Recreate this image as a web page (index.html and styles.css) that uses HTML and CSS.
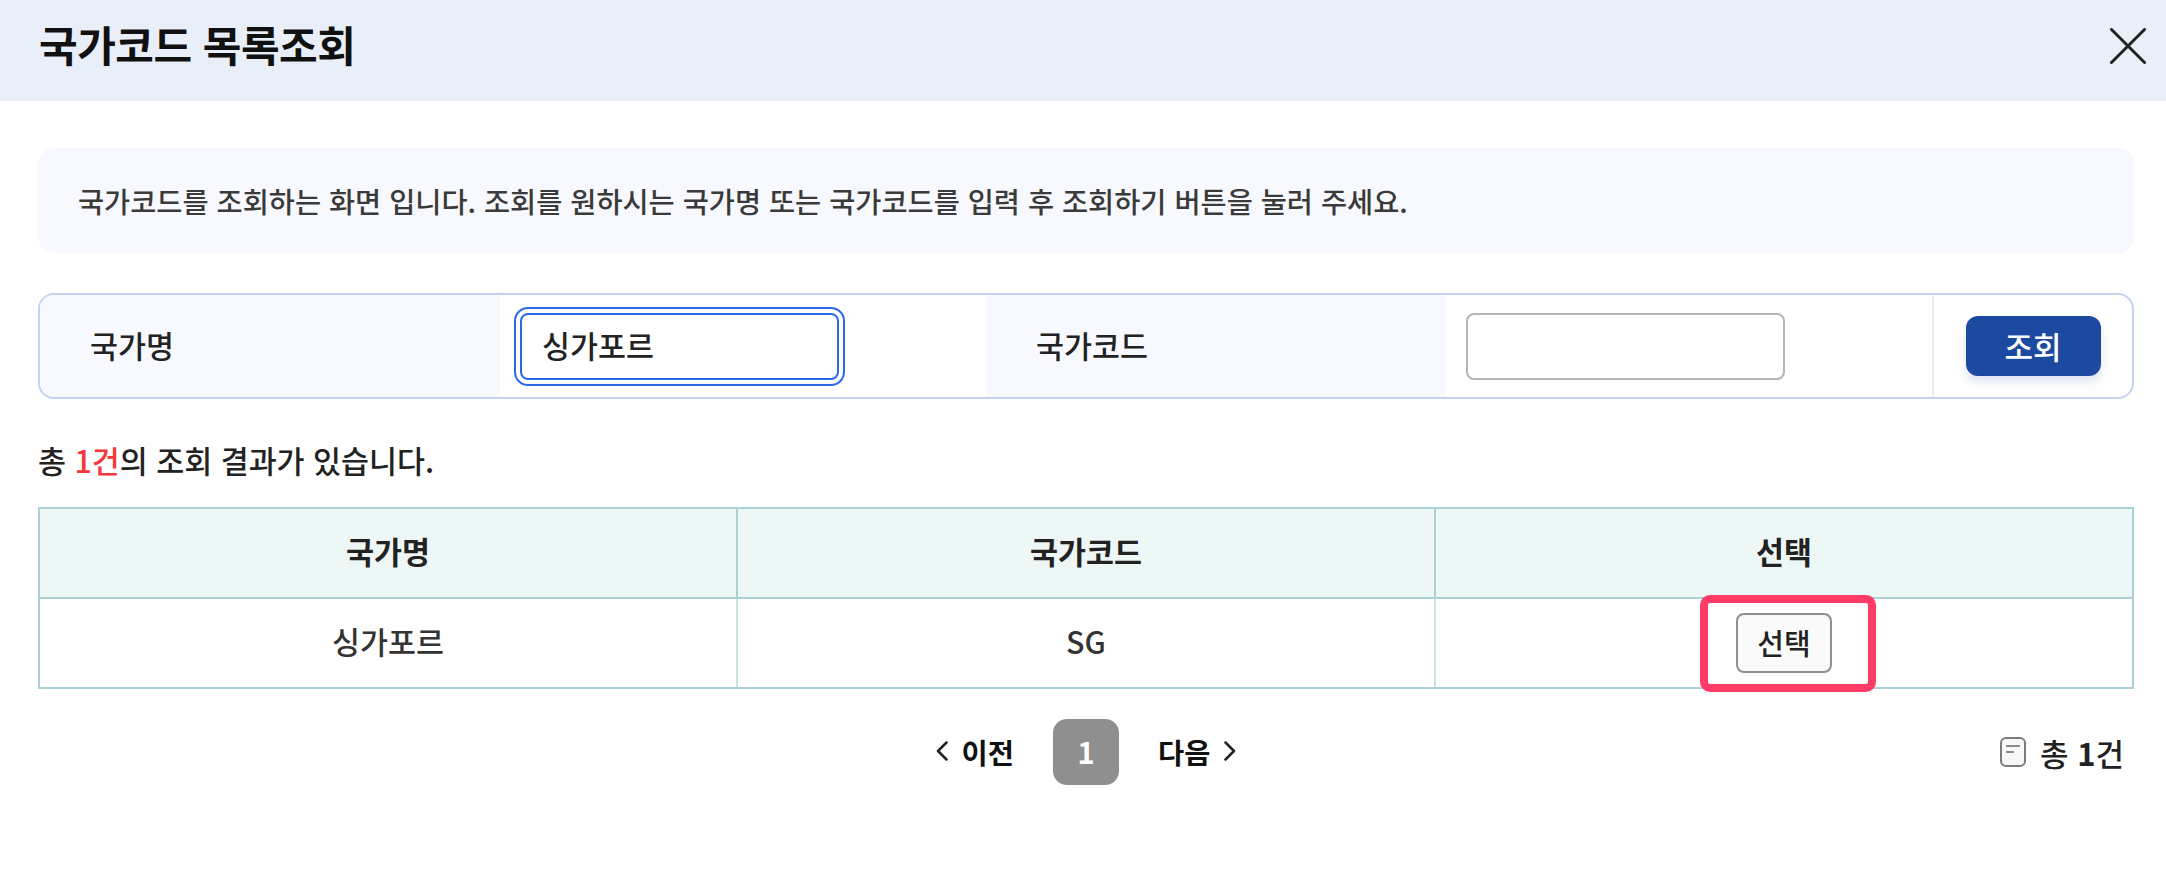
FILE: index.html
```html
<!DOCTYPE html>
<html lang="ko">
<head>
  <meta charset="UTF-8">
  <title>국가코드 목록조회</title>
  <link rel="stylesheet" href="styles.css">
</head>
<body>

  <header class="modal-head">
    <h1>국가코드 목록조회</h1>
    <button class="close-btn" aria-label="닫기">
      <svg width="36" height="36" viewBox="0 0 36 36"><path d="M1.5 1.5L34.5 34.5M34.5 1.5L1.5 34.5"/></svg>
    </button>
  </header>

  <main class="modal-body">
    <p class="info-box">국가코드를 조회하는 화면 입니다. 조회를 원하시는 국가명 또는 국가코드를 입력 후 조회하기 버튼을 눌러 주세요.</p>

    <div class="search-box">
      <label class="search-label">국가명</label>
      <div class="search-field"><input class="text-input focused" type="text" value="싱가포르"></div>
      <label class="search-label second">국가코드</label>
      <div class="search-field"><input class="text-input" type="text"></div>
      <div class="search-action"><button class="search-btn">조회</button></div>
    </div>

    <p class="result-text">총 <em>1건</em>의 조회 결과가 있습니다.</p>

    <table class="result-table">
      <thead>
        <tr><th>국가명</th><th>국가코드</th><th>선택</th></tr>
      </thead>
      <tbody>
        <tr>
          <td>싱가포르</td>
          <td>SG</td>
          <td class="select-cell">
            <button class="select-btn">선택</button>
            <span class="highlight"></span>
          </td>
        </tr>
      </tbody>
    </table>

    <div class="pager-row">
      <div class="pager">
        <a class="page-link">
          <svg width="12" height="20" viewBox="0 0 12 20"><path d="M10.5 1.5L2 10L10.5 18.5"/></svg>
          이전
        </a>
        <span class="page-num">1</span>
        <a class="page-link">
          다음
          <svg width="12" height="20" viewBox="0 0 12 20"><path d="M1.5 1.5L10 10L1.5 18.5"/></svg>
        </a>
      </div>
      <div class="total">
        <svg width="26" height="30" viewBox="0 0 26 30"><rect x="1" y="1" width="24" height="28" rx="5"/><path d="M6 9H20M6 15H14"/></svg>
        <span>총 <b>1</b>건</span>
      </div>
    </div>
  </main>

</body>
</html>
```

FILE: styles.css
```css
* {
  box-sizing: border-box;
}

body {
  margin: 0;
  background: #fff;
  color: #222;
  font-family: "Noto Sans CJK KR", "Noto Sans", sans-serif;
}

.modal-head {
  height: 101px;
  padding: 0 20px 10px 39px;
  background: #e8eff9;
  display: flex;
  align-items: center;
  justify-content: space-between;
}

.modal-head h1 {
  margin: 0 0 4px;
  font-size: 42px;
  font-weight: 700;
  color: #111;
  letter-spacing: -0.5px;
}

.close-btn {
  padding: 0;
  border: none;
  background: none;
  display: flex;
}

.close-btn path {
  stroke: #222;
  stroke-width: 3;
  stroke-linecap: round;
  fill: none;
}

.modal-body {
  padding: 47px 32px 0 38px;
}

.info-box {
  margin: 0;
  height: 105px;
  padding: 0 40px;
  display: flex;
  align-items: center;
  background: #f8f9fe;
  border-radius: 16px;
  font-size: 28.4px;
  font-weight: 500;
  color: #3a3a3a;
}

.search-box {
  margin-top: 40px;
  height: 106px;
  border: 2px solid #c3d3ef;
  border-radius: 16px;
  overflow: hidden;
  display: grid;
  grid-template-columns: 460px 486px 460px 486px 1fr;
}

.search-label {
  padding: 0 0 2px 50px;
  display: flex;
  align-items: center;
  background: #f8f9fe;
  font-size: 30.4px;
  font-weight: 500;
}

.search-field {
  padding-left: 20px;
  display: flex;
  align-items: center;
}

.text-input {
  width: 319px;
  height: 67px;
  padding: 0 20px 2px;
  border: 2px solid #b5b5b5;
  border-radius: 8px;
  background: #fff;
  font-family: inherit;
  font-size: 30.4px;
  font-weight: 500;
  color: #222;
}

.text-input.focused {
  border-color: #2a6ae8;
  outline: 2px solid #2a6ae8;
  outline-offset: 4px;
}

.search-action {
  border-left: 2px solid #e6edf8;
  display: flex;
  align-items: center;
  justify-content: center;
}

.search-btn {
  width: 135px;
  height: 60px;
  padding: 0 0 2px;
  border: none;
  border-radius: 12px;
  background: #1c4aa0;
  box-shadow: 0 6px 10px rgba(28, 74, 160, 0.15);
  color: #fff;
  font-family: inherit;
  font-size: 31px;
  font-weight: 500;
}

.result-text {
  margin: 40px 0 0;
  line-height: 42px;
  font-size: 30.4px;
  font-weight: 500;
}

.result-text em {
  font-style: normal;
  color: #f5363c;
}

.result-table {
  margin-top: 26px;
  width: 100%;
  border-collapse: collapse;
  table-layout: fixed;
}

.result-table th,
.result-table td {
  height: 90px;
  padding: 0 0 4px;
  text-align: center;
  font-size: 30.4px;
  border: 2px solid #abd1d6;
}

.result-table th {
  background: #edf7f6;
  font-weight: 700;
}

.result-table td {
  font-weight: 500;
  color: #333;
  border-left-color: #c8e3e6;
  border-right-color: #c8e3e6;
}

.result-table td:first-child {
  border-left-color: #abd1d6;
}

.result-table td:last-child {
  border-right-color: #abd1d6;
}

.result-table .select-cell {
  position: relative;
  padding: 0;
}

.select-btn {
  width: 96px;
  height: 60px;
  padding: 0 0 2px;
  border: 2px solid #8f8f8f;
  border-radius: 8px;
  background: #fafafa;
  color: #222;
  font-family: inherit;
  font-size: 29px;
  font-weight: 500;
  vertical-align: middle;
}

.highlight {
  position: absolute;
  left: 264px;
  top: -4px;
  width: 176px;
  height: 97px;
  border: 8px solid #ff3b66;
  border-radius: 10px;
}

.pager-row {
  margin-top: 30px;
  position: relative;
  display: flex;
  justify-content: center;
}

.pager {
  display: flex;
  align-items: center;
  gap: 39px;
}

.page-link {
  display: flex;
  align-items: center;
  gap: 14px;
  padding-bottom: 2px;
  font-size: 28.5px;
  font-weight: 700;
  color: #111;
}

.page-link path {
  stroke: #222;
  stroke-width: 2.5;
  stroke-linecap: round;
  stroke-linejoin: round;
  fill: none;
}

.page-num {
  width: 66px;
  height: 66px;
  padding-bottom: 2px;
  border-radius: 14px;
  background: #8f8f8f;
  color: #fff;
  display: flex;
  align-items: center;
  justify-content: center;
  font-size: 29px;
  font-weight: 700;
}

.total {
  position: absolute;
  right: 10px;
  top: 0;
  height: 66px;
  display: flex;
  align-items: center;
  gap: 14px;
  font-size: 31px;
  font-weight: 500;
}

.total b {
  font-weight: 700;
}

.total rect {
  fill: #f8f8f8;
  stroke: #7c7c7c;
  stroke-width: 2;
}

.total path {
  stroke: #8a8a8a;
  stroke-width: 2;
  fill: none;
}
```
